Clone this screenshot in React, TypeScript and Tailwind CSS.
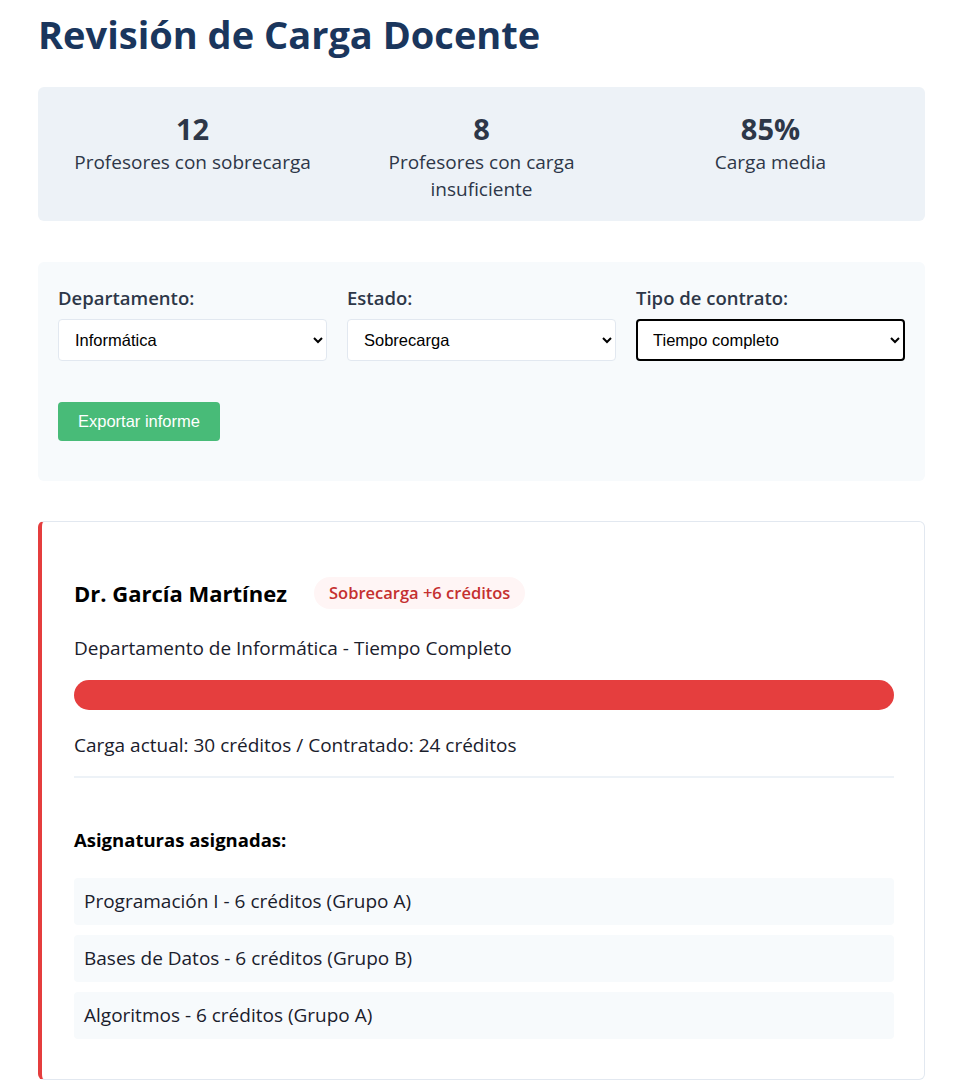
import React from 'react'

const stats = [
  { value: '12', label: 'Profesores con sobrecarga' },
  { value: '8', label: 'Profesores con carga insuficiente' },
  { value: '85%', label: 'Carga media' },
]

const filters = [
  { label: 'Departamento:', value: 'Informática', options: ['Informática', 'Matemáticas', 'Física'], focused: false },
  { label: 'Estado:', value: 'Sobrecarga', options: ['Sobrecarga', 'Carga insuficiente', 'Normal'], focused: false },
  { label: 'Tipo de contrato:', value: 'Tiempo completo', options: ['Tiempo completo', 'Tiempo parcial'], focused: true },
]

const asignaturas = [
  'Programación I - 6 créditos (Grupo A)',
  'Bases de Datos - 6 créditos (Grupo B)',
  'Algoritmos - 6 créditos (Grupo A)',
]

export default function App() {
  return (
    <div className="min-h-screen bg-white px-[38px] pt-[11px] pb-2 font-['Open_Sans',sans-serif] text-[#1a202c]">
      <h1 className="text-[38px] leading-[46px] font-bold text-[#1a365d] mb-[30px]">Revisión de Carga Docente</h1>

      {/* Stats */}
      <div className="bg-[#edf2f7] rounded-md px-5 pt-[21px] pb-[18px] grid grid-cols-3 gap-5 text-center text-[#2d3748]">
        {stats.map((s) => (
          <div key={s.label}>
            <div className="text-[29px] leading-[41px] font-bold">{s.value}</div>
            <div className="text-[19px] leading-[27px]">{s.label}</div>
          </div>
        ))}
      </div>

      {/* Filters */}
      <div className="mt-[41px] bg-[#f7fafc] rounded-md px-5 pt-[22px] pb-10">
        <div className="grid grid-cols-3 gap-5">
          {filters.map((f) => (
            <div key={f.label}>
              <label className="block text-[18.5px] leading-[27px] font-semibold text-[#2d3748] mb-2">{f.label}</label>
              <select
                defaultValue={f.value}
                className={
                  f.focused
                    ? "w-full h-[42px] bg-white rounded-[4px] border-2 border-black px-[11px] font-['Liberation_Sans',sans-serif] text-[16.5px] text-black"
                    : "w-full h-[42px] bg-white rounded-[4px] border border-[#e2e8f0] px-3 font-['Liberation_Sans',sans-serif] text-[16.5px] text-black"
                }
              >
                {f.options.map((o) => (
                  <option key={o}>{o}</option>
                ))}
              </select>
            </div>
          ))}
        </div>
        <button className="mt-[41px] bg-[#48bb78] text-white rounded-[4px] px-5 h-[39px] font-['Liberation_Sans',sans-serif] text-[16.5px]">
          Exportar informe
        </button>
      </div>

      {/* Card */}
      <div className="mt-10 bg-white border border-[#e2e8f0] border-l-4 border-l-[#e53e3e] rounded-md pl-8 pr-[30px] pt-[55px] pb-[40px]">
        <div className="flex items-center">
          <h3 className="text-[22px] leading-[30px] font-bold text-black">Dr. García Martínez</h3>
          <span className="ml-[27px] h-8 flex items-center rounded-full bg-[#fff5f5] text-[#c53030] px-[15px] text-[16.5px] font-semibold">
            Sobrecarga +6 créditos
          </span>
        </div>
        <p className="mt-[26px] text-[19px] leading-[27px]">Departamento de Informática - Tiempo Completo</p>
        <div className="mt-[18px] h-[30px] rounded-full bg-[#e53e3e]" />
        <p className="mt-[22px] text-[19px] leading-[27px]">Carga actual: 30 créditos / Contratado: 24 créditos</p>
        <div className="mt-[17px] h-[2px] bg-[#edf2f7]" />
        <h4 className="mt-[48px] text-[18.5px] leading-[27px] font-bold text-black">Asignaturas asignadas:</h4>
        <div className="mt-[25px] flex flex-col gap-[10px]">
          {asignaturas.map((a) => (
            <div key={a} className="bg-[#f7fafc] rounded-[4px] px-[10px] py-[10px] text-[19px] leading-[27px]">
              {a}
            </div>
          ))}
        </div>
      </div>
    </div>
  )
}
